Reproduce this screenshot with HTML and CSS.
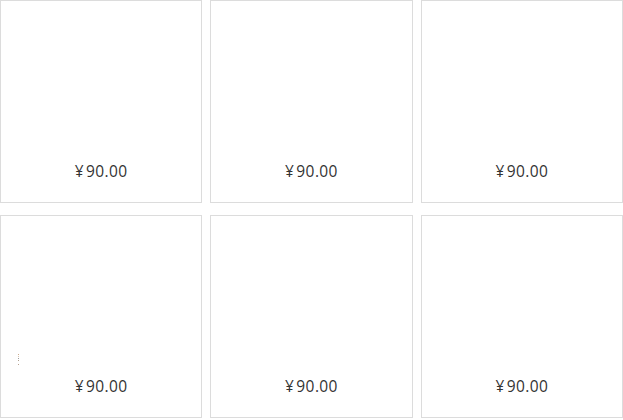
FILE: index.html
```html
<!DOCTYPE html>
<html lang="zh">
<head>
<meta charset="utf-8">
<link rel="stylesheet" href="styles.css">
</head>
<body>
<div class="grid">
  <div class="card"><div class="pic"></div><div class="price"><span class="yen">¥</span>90.00</div></div>
  <div class="card"><div class="pic"></div><div class="price"><span class="yen">¥</span>90.00</div></div>
  <div class="card"><div class="pic"></div><div class="price"><span class="yen">¥</span>90.00</div></div>
  <div class="card"><div class="pic"><span class="dots"></span></div><div class="price"><span class="yen">¥</span>90.00</div></div>
  <div class="card"><div class="pic"></div><div class="price"><span class="yen">¥</span>90.00</div></div>
  <div class="card"><div class="pic"></div><div class="price"><span class="yen">¥</span>90.00</div></div>
</div>
</body>
</html>
```
FILE: styles.css
```css
html, body { margin: 0; padding: 0; background: #fff; }
body { font-family: "Open Sans", "Noto Sans CJK SC", sans-serif; }
.grid {
  display: grid;
  grid-template-columns: repeat(3, 1fr);
  column-gap: 8px;
  row-gap: 12px;
  width: 623px;
}
.card {
  box-sizing: border-box;
  height: 203px;
  border: 1px solid #dcdcdc;
  display: flex;
  flex-direction: column;
}
.pic { flex: 1; position: relative; }
.price {
  height: 20px;
  padding-bottom: 21px;
  text-align: center;
  font-size: 15.5px;
  letter-spacing: 0.4px;
  color: #333;
  line-height: 20px;
}
.yen { margin-right: 2px; }
.dots {
  position: absolute;
  left: 17px;
  top: 138px;
  width: 1px;
  height: 11px;
  background: linear-gradient(#c9a88a 0 1px, transparent 1px 2px, #d8c4b0 2px 3px, transparent 3px 4px, #9a9a9a 4px 5px, transparent 5px 6px, #b0a090 6px 7px, transparent 7px 10px, #b8a290 10px 11px);
}
```
